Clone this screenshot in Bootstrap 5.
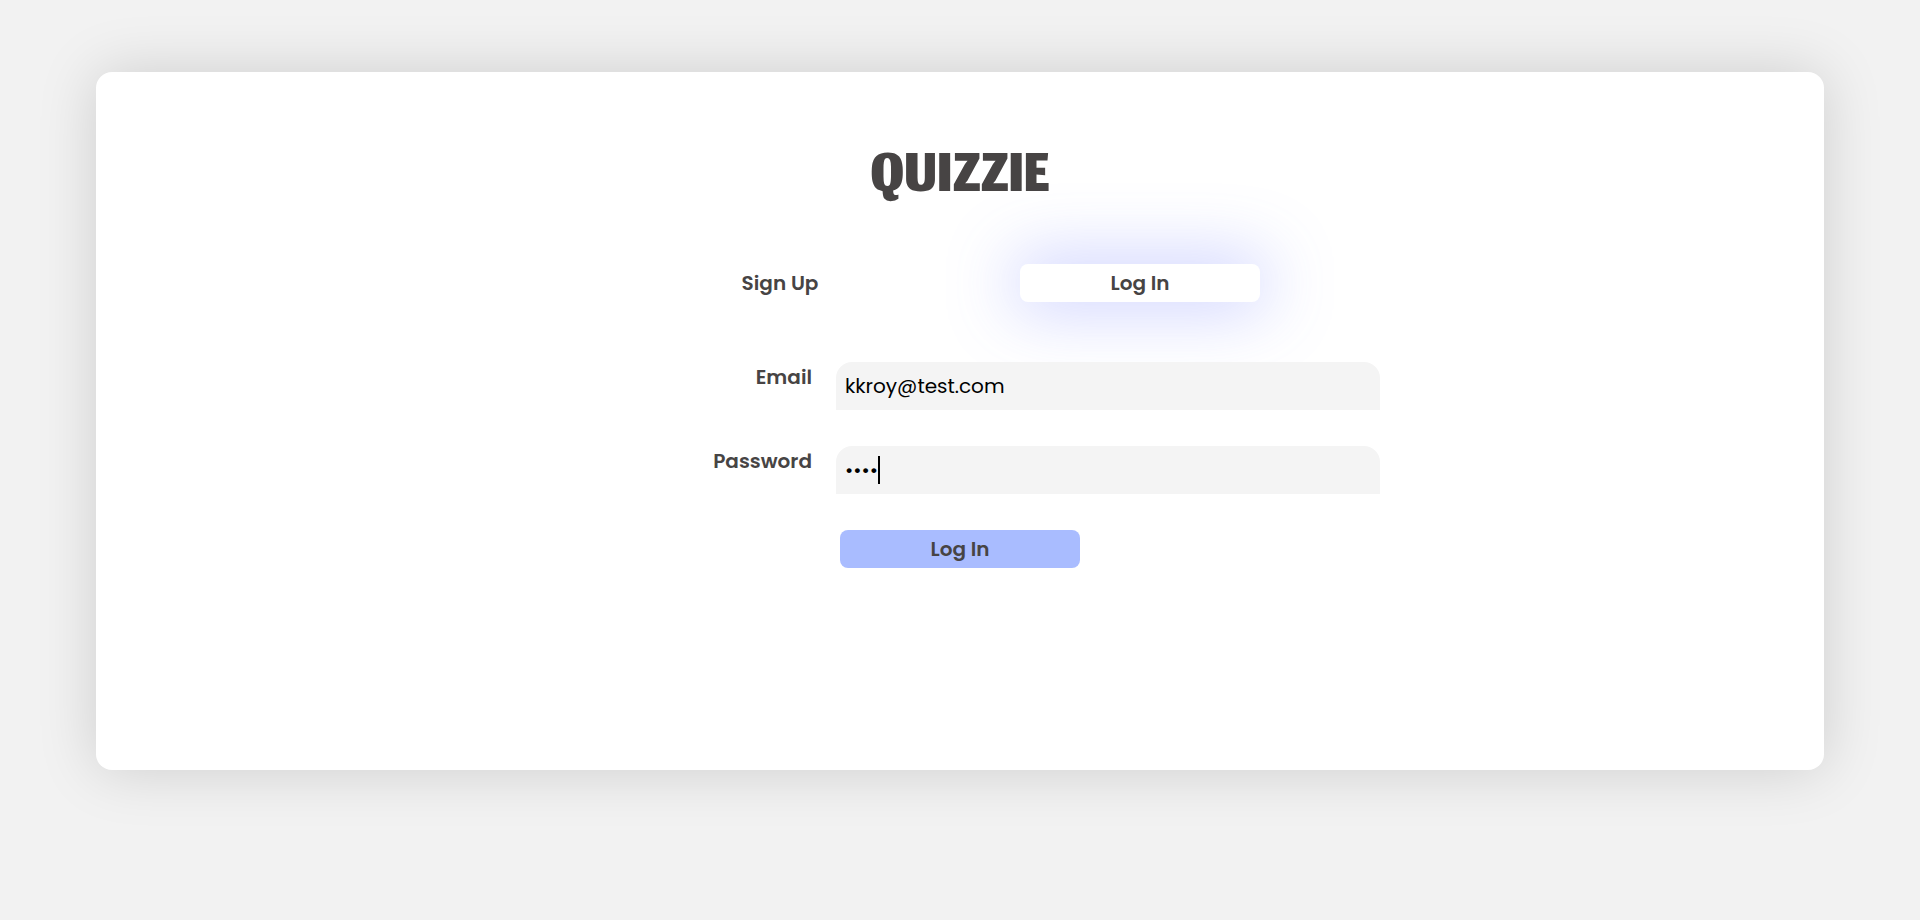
<!DOCTYPE html>
<html lang="en">
<head>
<meta charset="utf-8">
<meta name="viewport" content="width=device-width, initial-scale=1">
<title>Quizzie</title>
<link href="https://cdn.jsdelivr.net/npm/bootstrap@5.3.0/dist/css/bootstrap.min.css" rel="stylesheet">
<style>
  body { background: #f2f2f2; color: #474444; font-family: Poppins, Inter, sans-serif; font-size: 20px; line-height: 30px; }
  .auth-panel { width: 90%; min-height: 698px; margin: 72px auto; padding: 76px 16px; border-radius: 16px; background: #fff; box-shadow: 0 0 60px rgba(0, 0, 0, .15); }
  .brand-title { font-family: Jomhuria, Roboto, sans-serif; font-size: 96px; font-weight: 400; line-height: 64px; }
  .auth-tabs { max-width: 720px; margin-top: 52px; }
  .auth-btn { width: 240px; padding: 4px; border: 0; border-radius: 8px; background: #fff; color: inherit; font-weight: 600; }
  .auth-btn.active { box-shadow: 0 0 68px 6px rgba(96, 112, 255, .35); }
  .auth-btn.submit { background: #a9bcff; }
  .auth-form { max-width: 840px; margin-top: 60px; }
  .auth-label { width: 272px; padding-right: 24px; text-align: right; font-weight: 600; }
  .field-wrap { max-width: 544px; }
  .auth-input { width: 100%; height: 48px; padding: 8px 9px; border: 0; border-radius: 16px 16px 0 0; background: #f4f4f4; color: #000; outline: 0; }
  .auth-row { margin-bottom: 36px; }
  .caret { left: 42px; top: 10px; width: 2px; height: 28px; background: #000; }
</style>
</head>
<body>
<main class="auth-panel">
  <h1 class="brand-title text-center mb-0">QUIZZIE</h1>
  <div class="auth-tabs mx-auto d-flex justify-content-around">
    <button type="button" class="auth-btn">Sign Up</button>
    <button type="button" class="auth-btn active">Log In</button>
  </div>
  <form class="auth-form mx-auto">
    <div class="auth-row d-flex justify-content-end">
      <label class="auth-label" for="email">Email</label>
      <div class="field-wrap flex-grow-1"><input class="auth-input d-block" id="email" type="email" value="kkroy@test.com"></div>
    </div>
    <div class="auth-row d-flex justify-content-end">
      <label class="auth-label" for="password">Password</label>
      <div class="field-wrap flex-grow-1 position-relative"><input class="auth-input d-block" id="password" type="password" value="test"><span class="caret position-absolute"></span></div>
    </div>
    <button type="submit" class="auth-btn submit d-block mx-auto">Log In</button>
  </form>
</main>
<script src="https://cdn.jsdelivr.net/npm/bootstrap@5.3.0/dist/js/bootstrap.bundle.min.js"></script>
</body>
</html>
